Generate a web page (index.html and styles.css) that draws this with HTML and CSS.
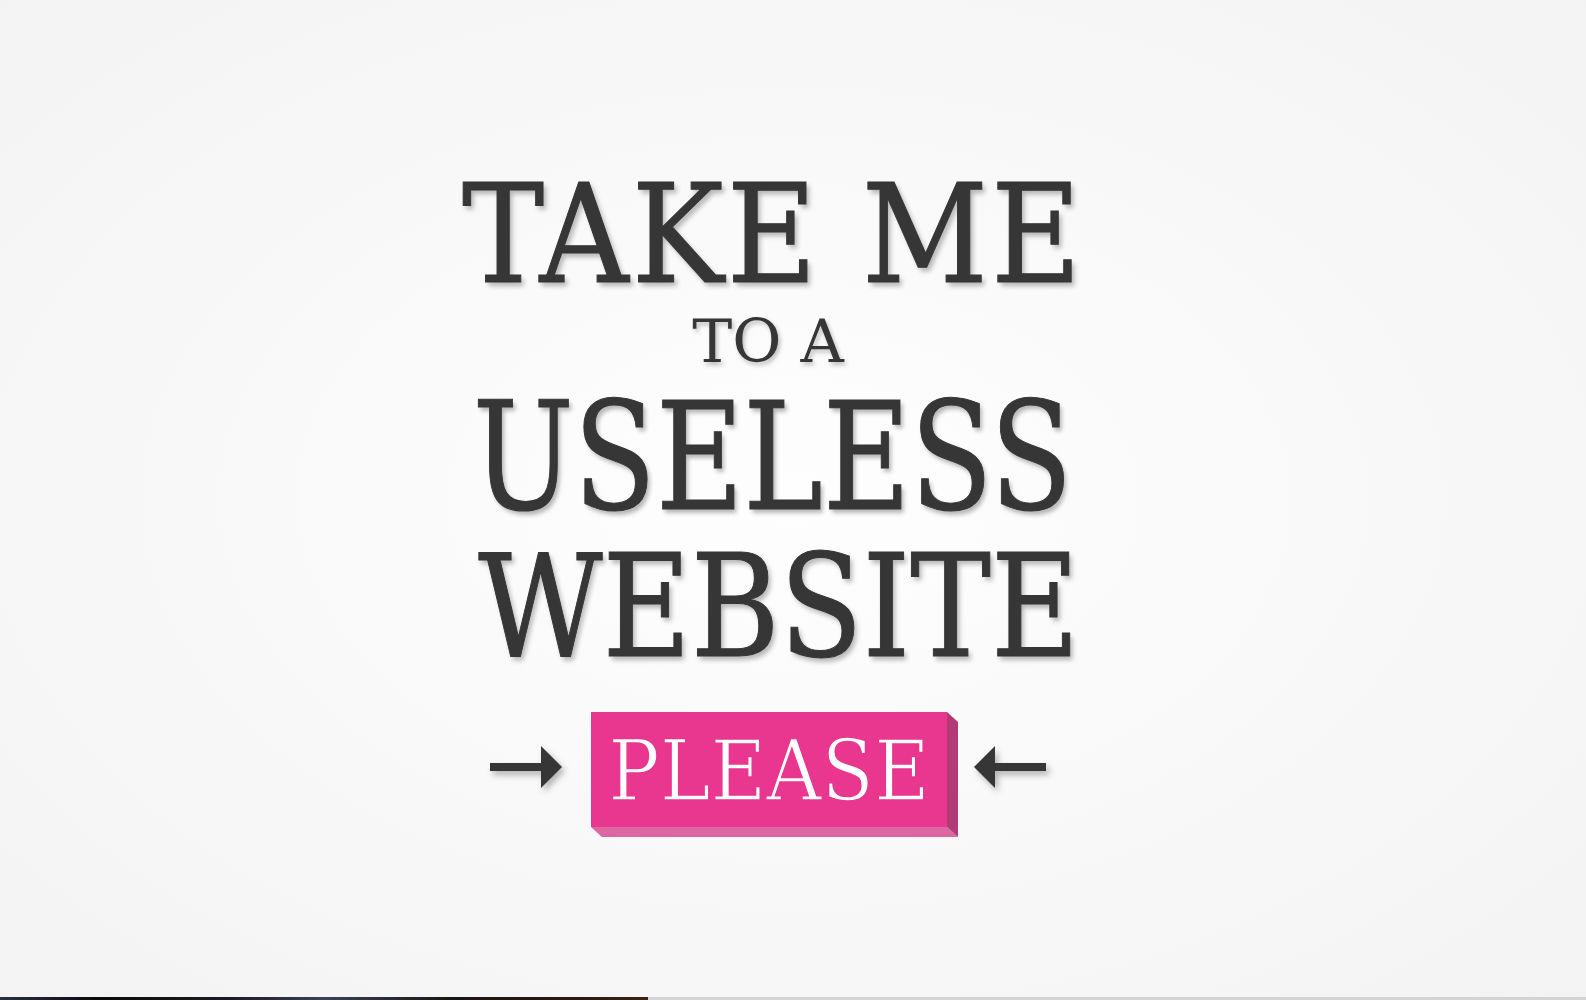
FILE: index.html
```html
<!DOCTYPE html>
<html lang="en">
<head>
<meta charset="utf-8">
<title>The Useless Web</title>
<link rel="stylesheet" href="styles.css">
</head>
<body>
<main class="page">
  <h1 class="title">
    <span class="line big line-take">TAKE ME</span>
    <span class="line small">TO A</span>
    <span class="line big line-useless">USELESS</span>
    <span class="line big line-website">WEBSITE</span>
  </h1>
  <div class="cta">
    <svg class="arrow" width="72" height="42" viewBox="0 0 72 42"><path d="M0 17h51V0l21 21-21 21V25H0z" fill="#363636"/></svg>
    <a class="please" href="#">PLEASE</a>
    <svg class="arrow" width="72" height="42" viewBox="0 0 72 42"><path d="M72 17H21V0L0 21l21 21V25h51z" fill="#363636"/></svg>
  </div>
</main>
<div class="bar"><div class="bar-fill"></div></div>
</body>
</html>
```
FILE: styles.css
```css
html, body {
  margin: 0;
  height: 100%;
}
body {
  background: radial-gradient(ellipse at 50% 50%, #fefefe 0%, #f9f9f9 45%, #f3f3f3 100%);
  color: #363636;
  font-family: "DejaVu Serif", serif;
  display: flex;
  flex-direction: column;
  overflow: hidden;
}
.page {
  flex: 1;
  display: flex;
  flex-direction: column;
  align-items: center;
  padding-top: 170px;
  padding-right: 50px;
}
.title {
  margin: 0;
  font-weight: normal;
  display: flex;
  flex-direction: column;
  align-items: center;
}
.line {
  display: block;
  white-space: nowrap;
  text-shadow: 3px 4px 5px rgba(0, 0, 0, 0.28);
}
.big {
  font-family: "DejaVu Serif Condensed", "DejaVu Serif", serif;
  font-weight: normal;
  line-height: 130px;
  -webkit-text-stroke: 1px #363636;
}
.line-take {
  font-size: 137px;
  letter-spacing: 3px;
  margin-left: 10px;
}
.small {
  font-family: "DejaVu Serif", serif;
  font-size: 60px;
  line-height: 55px;
  margin-top: 14px;
  text-shadow: 2px 3px 4px rgba(0, 0, 0, 0.25);
}
.line-useless {
  font-size: 150px;
  margin-top: 23px;
  margin-left: 10px;
  transform: scaleX(0.888);
}
.line-website {
  font-size: 143px;
  margin-top: 20px;
  margin-left: 21px;
  transform: scaleX(0.94);
}
.cta {
  display: flex;
  align-items: center;
  margin-top: 40px;
}
.arrow {
  display: block;
  filter: drop-shadow(3px 4px 3px rgba(0, 0, 0, 0.28));
  margin-bottom: 5px;
}
.please {
  position: relative;
  display: block;
  width: 356px;
  height: 115px;
  margin: 0 27px 0 29px;
  background: #e9368f;
  color: #ffffff;
  text-decoration: none;
  text-align: center;
  font-family: "DejaVu Serif Condensed", "DejaVu Serif", serif;
  font-size: 85px;
  line-height: 117px;
  -webkit-text-stroke: 1.5px #e9368f;
}
.please::before,
.please::after {
  content: "";
  position: absolute;
}
.please::before {
  left: 0;
  top: 100%;
  width: calc(100% + 11px);
  height: 10px;
  background: #de66a2;
  clip-path: polygon(0 0, calc(100% - 11px) 0, 100% 100%, 11px 100%);
}
.please::after {
  left: 100%;
  top: 0;
  width: 11px;
  height: calc(100% + 10px);
  background: #b23a77;
  clip-path: polygon(0 0, 100% 10px, 100% 100%, 0 calc(100% - 10px));
}
.bar {
  height: 3px;
  background: #d4d4d4;
  flex: none;
}
.bar-fill {
  height: 100%;
  width: 648px;
  background: linear-gradient(90deg, #2a3040 0%, #0a0a0e 15%, #1a1a22 35%, #3a4256 50%, #1a1512 70%, #2b1a12 90%, #3a2418 100%);
}
```
